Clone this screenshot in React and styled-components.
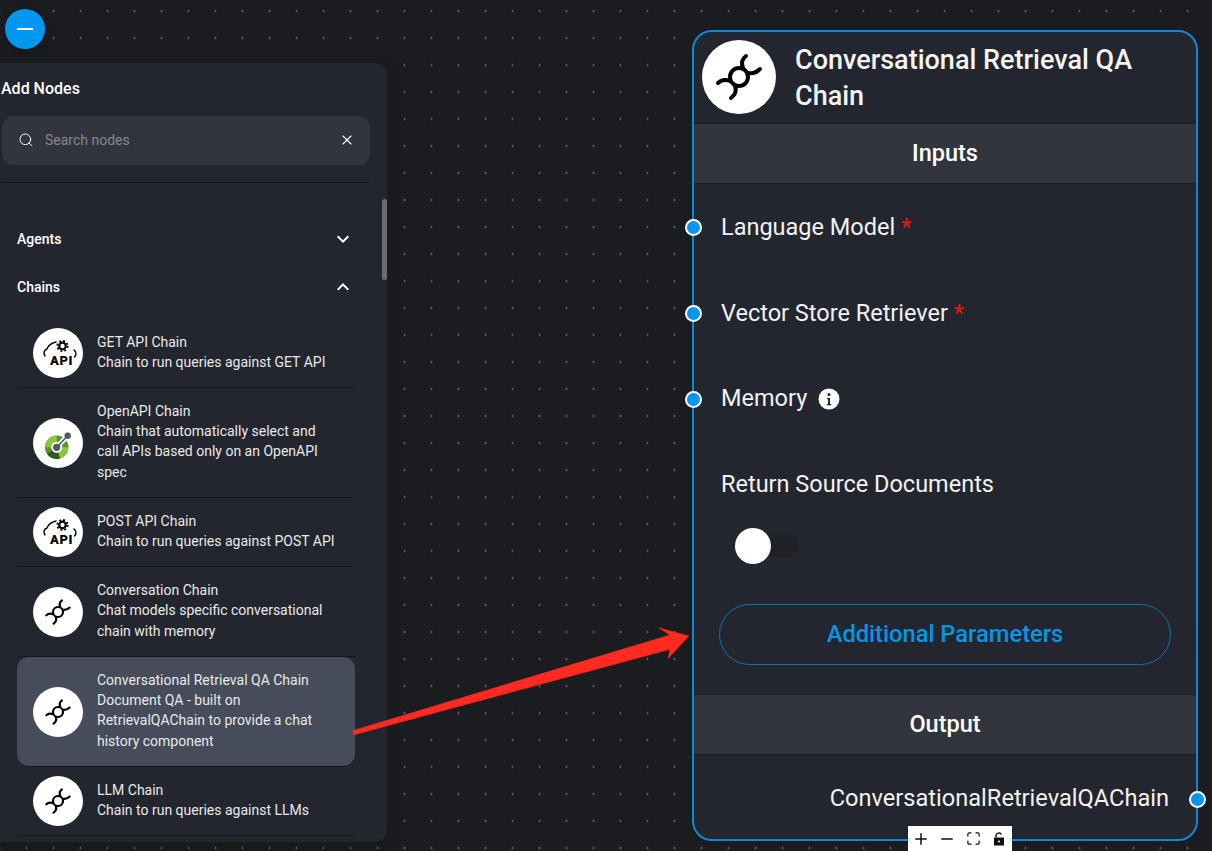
import React from "react";
import styled, { createGlobalStyle } from "styled-components";
import { Search, X, Plus, Minus, Maximize } from "lucide-react";

const GlobalStyle = createGlobalStyle`
  html, body { margin: 0; padding: 0; height: 100%; background: #1a1c20; }
  * { box-sizing: border-box; }
  body { font-family: Roboto, "Liberation Sans", sans-serif; color: #fff; }
`;

const chains = [
  { icon: "api", title: "GET API Chain", lines: ["Chain to run queries against GET API"] },
  { icon: "openapi", title: "OpenAPI Chain", lines: ["Chain that automatically select and", "call APIs based only on an OpenAPI", "spec"] },
  { icon: "api", title: "POST API Chain", lines: ["Chain to run queries against POST API"] },
  { icon: "chain", title: "Conversation Chain", lines: ["Chat models specific conversational", "chain with memory"] },
  { icon: "chain", title: "Conversational Retrieval QA Chain", selected: true, lines: ["Document QA - built on", "RetrievalQAChain to provide a chat", "history component"] },
  { icon: "chain", title: "LLM Chain", lines: ["Chain to run queries against LLMs"] },
];

const Canvas = styled.div`
  position: relative;
  width: 1212px;
  height: 851px;
  overflow: hidden;
  background-color: #1a1c20;
  background-image: radial-gradient(circle at center, #6f7073 0.9px, transparent 1.1px);
  background-size: 27px 27px;
  background-position: 13px -2.5px;
`;

const Fab = styled.button`
  position: absolute;
  left: 5px;
  top: 9px;
  width: 40px;
  height: 40px;
  border: 0;
  padding: 0;
  border-radius: 50%;
  background: #0097f0;
  display: flex;
  align-items: center;
  justify-content: center;
  box-shadow: 0 2px 8px rgba(0, 0, 0, 0.3);
  &::after {
    content: "";
    width: 16px;
    height: 2px;
    background: #fff;
  }
`;

const Panel = styled.aside`
  position: absolute;
  left: -14px;
  top: 63px;
  width: 401px;
  height: 779px;
  background: #23262e;
  border-radius: 12px;
  overflow: hidden;
  box-shadow: 0 4px 16px rgba(0, 0, 0, 0.12);
`;

const PanelHead = styled.div`
  padding: 15px 17px 0 15px;
`;

const PanelTitle = styled.h4`
  margin: 0 0 17px;
  font-size: 16px;
  line-height: 21px;
  font-weight: 500;
`;

const SearchBox = styled.div`
  display: flex;
  align-items: center;
  height: 49px;
  margin-left: 1px;
  padding: 0 15px 1px 16px;
  background: #32353d;
  border-radius: 12px;
  color: #fff;
`;

const SearchText = styled.span`
  flex: 1;
  margin-left: 11px;
  font-size: 14px;
  color: #85878c;
`;

const Divider = styled.div`
  height: 1px;
  margin-top: 17px;
  background: #17181c;
`;

const ScrollThumb = styled.div`
  position: absolute;
  right: 0;
  top: 136px;
  width: 5px;
  height: 81px;
  border-radius: 3px;
  background: #6b6c70;
`;

const Sections = styled.div`
  padding: 32px 0 0 31px;
  width: 369px;
`;

const SectionRow = styled.div`
  display: flex;
  align-items: center;
  justify-content: space-between;
  height: 48px;
  font-size: 14px;
  font-weight: 500;
`;

const Chevron = styled.svg`
  width: 24px;
  height: 24px;
  fill: #fff;
  transform: ${(p) => (p.$up ? "rotate(180deg)" : "none")};
`;

const ChainList = styled.div`
  margin-top: 8px;
  width: 338px;
`;

const ChainItem = styled.div`
  display: flex;
  align-items: center;
  gap: 14px;
  padding: 0 16px;
  min-height: ${(p) => 48.3 + p.$lines * 20.7}px;
  border-radius: ${(p) => (p.$selected ? "12px" : "0")};
  background: ${(p) => (p.$selected ? "#464c59" : "transparent")};
  border-bottom: 1px solid #17181c;
`;

const IconCircle = styled.div`
  flex: none;
  width: ${(p) => p.$size}px;
  height: ${(p) => p.$size}px;
  border-radius: 50%;
  background: #fff;
  display: flex;
  align-items: center;
  justify-content: center;
`;

const HeaderIcon = styled(IconCircle)`
  margin-bottom: 2px;
`;

const ChainText = styled.div`
  padding-bottom: 2px;
  font-size: 14px;
  line-height: 20.7px;
  color: #e8e9ea;
`;

const ChainTitle = styled.div`
  line-height: 20px;
`;

const Node = styled.section`
  position: absolute;
  left: 692px;
  top: 30px;
  width: 506px;
  height: 811px;
  background: #23262e;
  border: 2px solid #1088d8;
  border-radius: 20px;
`;

const NodeHeader = styled.header`
  display: flex;
  align-items: center;
  gap: 19px;
  height: 91px;
  padding: 0 8px;
`;

const NodeTitle = styled.h3`
  margin: 0;
  font-size: 27px;
  line-height: 36px;
  font-weight: 500;
  color: #f4f4f5;
`;

const SectionBar = styled.div`
  height: 61px;
  padding-bottom: 1px;
  display: flex;
  align-items: center;
  justify-content: center;
  background: #32353d;
  border-top: 1px solid #1a1c20;
  border-bottom: 1px solid #1a1c20;
  font-size: 23.5px;
  font-weight: 500;
`;

const ParamRow = styled.div`
  position: relative;
  display: flex;
  align-items: center;
  height: 85.7px;
  padding-left: 27px;
  font-size: 23.5px;
  color: #f2f2f3;
`;

const Handle = styled.span`
  position: absolute;
  ${(p) => (p.$right ? "right: -10px;" : "left: -9px;")}
  top: 50%;
  width: 17px;
  height: 17px;
  margin-top: -7.5px;
  background: #0097f0;
  border: 2px solid #fff;
  border-radius: 50%;
`;

const Required = styled.span`
  color: #f01414;
  margin-left: 6px;
`;

const InfoIcon = styled.svg`
  width: 24px;
  height: 24px;
  margin-left: 10px;
  margin-top: 2px;
`;

const SwitchRow = styled.div`
  padding-left: 41px;
  height: 38px;
  display: flex;
  align-items: center;
`;

const SwitchTrack = styled.div`
  position: relative;
  width: 63px;
  height: 23px;
  border-radius: 12px;
  background: #1f2126;
`;

const SwitchThumb = styled.span`
  position: absolute;
  left: 0;
  top: -6.5px;
  width: 36px;
  height: 36px;
  border-radius: 50%;
  background: #fff;
`;

const AdditionalButton = styled.button`
  display: block;
  width: 452px;
  height: 61px;
  margin: 39px 0 29px 25px;
  background: transparent;
  border: 1px solid #0e73ad;
  border-radius: 31px;
  color: #0097e6;
  font: 500 23.7px Roboto, sans-serif;
`;

const OutputRow = styled.div`
  position: relative;
  display: flex;
  align-items: center;
  justify-content: flex-end;
  height: 87px;
  padding-right: 27px;
  font-size: 23.6px;
  color: #f2f2f3;
`;

const Controls = styled.div`
  position: absolute;
  left: 908px;
  top: 826px;
  display: flex;
  background: #fff;
  color: #111;
  height: 25px;
  width: 104px;
`;

const ControlButton = styled.div`
  width: 26px;
  display: flex;
  align-items: center;
  justify-content: center;
`;

const ArrowLayer = styled.svg`
  position: absolute;
  left: 0;
  top: 0;
  pointer-events: none;
`;

const ChainGlyph = ({ size }) => (
  <svg width={size} height={size} viewBox="-27 -27 54 54" fill="none" stroke="#000" strokeWidth="4" strokeLinecap="round">
    <circle cx="0" cy="0" r="9" />
    <path d="M7 -21 C3 -18 2 -14 4 -9" />
    <path d="M21 -8 C18 -5 14 -3 9 -4" />
    <path d="M-21 6 C-18 3 -14 2 -9 4" />
    <path d="M-8 21 C-4 18 -2 14 -4 9" />
  </svg>
);

const ApiGlyph = () => (
  <svg width="50" height="50" viewBox="0 0 50 50" fill="none">
    <path d="M12 28 C10 25 11 22 14 21 C15 18 19 15 23 14" stroke="#000" strokeWidth="1.4" strokeLinecap="round" />
    <path d="M41 22 C43.500 24 43.500 27 41.500 29" stroke="#000" strokeWidth="1.4" strokeLinecap="round" />
    <circle cx="29.500" cy="18" r="3.300" stroke="#000" strokeWidth="2.200" />
    <circle cx="29.500" cy="18" r="5.200" stroke="#000" strokeWidth="1.700" strokeDasharray="2 2.080" />
    <text x="28.500" y="37" textAnchor="middle" fontFamily="Roboto, sans-serif" fontWeight="900" fontSize="13" letterSpacing="0.6" fill="#000">API</text>
  </svg>
);

const OpenApiGlyph = () => (
  <svg width="50" height="50" viewBox="0 0 50 50" fill="none">
    <circle cx="23.700" cy="29.300" r="11.700" fill="#5d9130" />
    <path d="M23.700 29.300 L12 29.300 A11.700 11.700 0 0 1 23.700 17.600 Z" fill="#8cc63f" />
    <path d="M23.700 29.300 L35.400 29.300 A11.700 11.700 0 0 1 27 40.500 Z" fill="#8cc63f" />
    <path d="M23.700 29.300 L27 40.500 A11.700 11.700 0 0 1 14 36 Z" fill="#2f5a22" />
    <path d="M23.700 29.300 L34.700 17.700" stroke="#fff" strokeWidth="5" />
    <circle cx="23.700" cy="29.300" r="5.500" fill="#fff" />
    <path d="M23.700 29.300 L34.700 17.700" stroke="#55585c" strokeWidth="1.600" />
    <circle cx="23.700" cy="29.300" r="3.600" fill="#55585c" />
    <circle cx="34.700" cy="17.700" r="3.200" fill="#55585c" />
  </svg>
);

const LockGlyph = () => (
  <svg width="14" height="16" viewBox="0 0 14 16">
    <path d="M4 6.500 V4.500 C4 2 8 1 9.500 3.500" fill="none" stroke="#111" strokeWidth="1.400" />
    <path d="M2 6.500 H12 V14.500 H2 Z M7 9.500 A1 1 0 1 0 7 11.500 A1 1 0 1 0 7 9.500 Z" fill="#111" fillRule="evenodd" />
  </svg>
);

const itemIcon = (item) => {
  if (item.icon === "api") return <ApiGlyph />;
  if (item.icon === "openapi") return <OpenApiGlyph />;
  return <ChainGlyph size={30} />;
};

const ExpandIcon = ({ up }) => (
  <Chevron $up={up} viewBox="0 0 24 24">
    <path d="M16.59 8.59 12 13.17 7.41 8.59 6 10l6 6 6-6z" />
  </Chevron>
);

export default function App() {
  return (
    <Canvas>
      <GlobalStyle />
      <Fab aria-label="collapse" />
      <Panel>
        <PanelHead>
          <PanelTitle>Add Nodes</PanelTitle>
          <SearchBox>
            <Search size={16} strokeWidth={1.5} />
            <SearchText>Search nodes</SearchText>
            <X size={16} strokeWidth={1.6} />
          </SearchBox>
          <Divider />
        </PanelHead>
        <ScrollThumb />
        <Sections>
          <SectionRow>
            Agents
            <ExpandIcon />
          </SectionRow>
          <SectionRow>
            Chains
            <ExpandIcon up />
          </SectionRow>
          <ChainList>
            {chains.map((item) => (
              <ChainItem key={item.title} $lines={item.lines.length} $selected={item.selected}>
                <IconCircle $size={50}>{itemIcon(item)}</IconCircle>
                <ChainText>
                  <ChainTitle>{item.title}</ChainTitle>
                  {item.lines.map((line) => (
                    <div key={line}>{line}</div>
                  ))}
                </ChainText>
              </ChainItem>
            ))}
          </ChainList>
        </Sections>
      </Panel>

      <Node>
        <NodeHeader>
          <HeaderIcon $size={74}>
            <ChainGlyph size={54} />
          </HeaderIcon>
          <NodeTitle>
            Conversational Retrieval QA
            <br />
            Chain
          </NodeTitle>
        </NodeHeader>
        <SectionBar>Inputs</SectionBar>
        <ParamRow>
          <Handle />
          Language Model<Required>*</Required>
        </ParamRow>
        <ParamRow>
          <Handle />
          Vector Store Retriever<Required>*</Required>
        </ParamRow>
        <ParamRow>
          <Handle />
          Memory
          <InfoIcon viewBox="0 0 24 24">
            <circle cx="12" cy="12" r="10.500" fill="#fff" />
            <circle cx="12" cy="7.500" r="1.500" fill="#23262e" />
            <path d="M10 11h3v6h1.200v1.200H9.800V17H11v-4.800h-1z" fill="#23262e" />
          </InfoIcon>
        </ParamRow>
        <ParamRow>Return Source Documents</ParamRow>
        <SwitchRow>
          <SwitchTrack>
            <SwitchThumb />
          </SwitchTrack>
        </SwitchRow>
        <AdditionalButton>Additional Parameters</AdditionalButton>
        <SectionBar>Output</SectionBar>
        <OutputRow>
          ConversationalRetrievalQAChain
          <Handle $right />
        </OutputRow>
      </Node>

      <Controls>
        <ControlButton><Plus size={18} strokeWidth={2} /></ControlButton>
        <ControlButton><Minus size={18} strokeWidth={2} /></ControlButton>
        <ControlButton><Maximize size={15} strokeWidth={2} /></ControlButton>
        <ControlButton><LockGlyph /></ControlButton>
      </Controls>

      <ArrowLayer width="1212" height="851" viewBox="0 0 1212 851">
        <polygon
          points="352.7,730.7 670,635 659.3,628 688.7,636 668.3,658.3 670,649.3 354,734.7"
          fill="#ff2a20"
          stroke="#ff2a20"
          strokeWidth="0.6"
          strokeLinejoin="round"
        />
      </ArrowLayer>
    </Canvas>
  );
}
